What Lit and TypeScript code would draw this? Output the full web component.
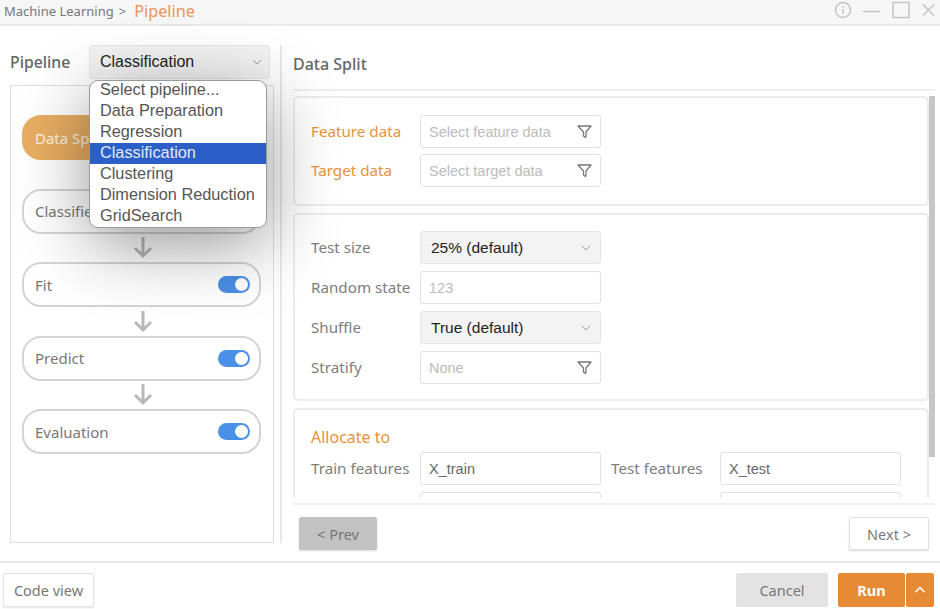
import {css, html, LitElement, svg, type TemplateResult} from 'lit';
import {customElement} from 'lit/decorators.js';

const PIPELINES = ['Select pipeline...', 'Data Preparation', 'Regression', 'Classification', 'Clustering', 'Dimension Reduction', 'GridSearch'];
const STEPS = ['Data Split', 'Classifier', 'Fit', 'Predict', 'Evaluation'];

const chevron = html`<svg class="chev" width="10" height="6" viewBox="0 0 10 6"><path d="M1 1l4 4 4-4" fill="none" stroke="#999" stroke-width="1"></path></svg>`;
const funnel = html`<svg class="funnel" width="15" height="15" viewBox="0 0 15 15"><path d="M1 2h13L9 8v3.5L8.500 13.500 6.500 12V8z" fill="none" stroke="#777" stroke-width="1.300" stroke-linejoin="round"></path></svg>`;
const arrow = svg`<svg width="20" height="23" viewBox="0 0 20 23"><path d="M10 1v19M2 12l8 8 8-8" fill="none" stroke="#b8b8b8" stroke-width="3"></path></svg>`;

@customElement('app-root')
export class AppRoot extends LitElement {

    static styles = css`
        :host {
            display: block;
            width: 940px;
            height: 609px;
            overflow: hidden;
            background: #fff;
            font-family: "Noto Sans", "Noto Sans CJK KR", sans-serif;
            color: #777;
        }
        .window {
            display: flex;
            flex-direction: column;
            height: 100%;
            position: relative;
        }
        .titlebar {
            flex: none;
            height: 26px;
            box-sizing: border-box;
            padding: 0 5px 2px 4px;
            display: flex;
            align-items: center;
            background: #f6f6f6;
            border-bottom: 2px solid #e8e8e8;
            font-size: 13px;
            color: #777;
            white-space: nowrap;
        }
        .crumb-now {
            font-size: 16.300px;
            color: #e8935a;
            margin-left: 8px;
        }
        .crumb-sep {
            margin-left: 5px;
        }
        .winbtns {
            margin-left: auto;
            display: block;
        }
        .work {
            flex: 1;
            min-height: 0;
            display: flex;
            padding: 19px 0 0 10px;
        }
        .left {
            flex: none;
            width: 264px;
            display: flex;
            flex-direction: column;
        }
        .pipe-row {
            flex: none;
            height: 34px;
            display: flex;
            align-items: center;
            font-size: 15.800px;
            font-weight: 500;
            color: #666;
        }
        .pipe-row > span {
            width: 79px;
            padding-bottom: 1px;
        }
        .select {
            box-sizing: border-box;
            display: flex;
            align-items: center;
            justify-content: space-between;
            height: 33px;
            background: #f3f3f3;
            border: 1px solid #e6e6e6;
            border-radius: 3px;
            font-family: "Liberation Sans", sans-serif;
            font-size: 16px;
            font-weight: 400;
            color: #222;
        }
        .pipe-select {
            width: 181px;
            height: 34px;
            padding: 0 7px 0 10px;
        }
        .flow {
            box-sizing: border-box;
            margin-top: 6px;
            height: 458px;
            border: 1px solid #dedede;
            padding: 29px 12px 0 11px;
        }
        .step {
            box-sizing: border-box;
            height: 45px;
            padding: 0 9px 0 11px;
            display: flex;
            align-items: center;
            justify-content: space-between;
            border: 2px solid #d4d4d4;
            border-radius: 19px;
            font-size: 15px;
            color: #777;
        }
        .step.active {
            background: #e8ae62;
            border-color: #e8ae62;
            color: #fdf3e3;
        }
        .arrow {
            height: 28.500px;
            padding-left: 2px;
            display: flex;
            align-items: center;
            justify-content: center;
        }
        .toggle {
            width: 32px;
            height: 17px;
            box-sizing: border-box;
            padding: 2px;
            display: flex;
            justify-content: flex-end;
            background: #4a8fe8;
            border-radius: 9px;
        }
        .toggle i {
            display: block;
            width: 13px;
            height: 13px;
            border-radius: 50%;
            background: #fff;
        }
        .divider {
            flex: none;
            width: 2px;
            height: 498px;
            margin-left: 6px;
            background: #e8e8e8;
        }
        .right {
            flex: none;
            width: 642px;
            margin-left: 11px;
            display: flex;
            flex-direction: column;
        }
        h2 {
            flex: none;
            box-sizing: border-box;
            height: 46px;
            margin: 0;
            padding-bottom: 6px;
            display: flex;
            align-items: center;
            border-bottom: 2px solid #efefef;
            font-size: 16px;
            font-weight: 500;
            color: #666;
        }
        .scroll {
            flex: none;
            height: 402px;
            margin-top: 5px;
            display: flex;
            overflow: hidden;
        }
        .panels {
            width: 636px;
            flex: none;
            display: flex;
            flex-direction: column;
            gap: 7px;
        }
        .thumb {
            flex: none;
            width: 7px;
            height: 361px;
            background: #c6c6c6;
        }
        .panel {
            flex: none;
            box-sizing: border-box;
            padding: 17px 16px;
            border: 2px solid #ececec;
            border-radius: 5px;
            display: grid;
            grid-template-columns: 109px 181px 119px 181px;
            row-gap: 6px;
            align-items: center;
        }
        .panel.settings {
            padding: 16px 16px 15px;
            row-gap: 7px;
        }
        .panel.allocate {
            padding-top: 18px;
            row-gap: 4px;
        }
        .panel .label {
            padding-bottom: 2px;
            font-size: 15.200px;
            color: #7d7d7d;
            white-space: nowrap;
        }
        .panel .label.second {
            padding-left: 10px;
        }
        .panel .label.accent,
        .panel .heading {
            color: #e8923a;
        }
        .heading {
            grid-column: 1 / -1;
            font-size: 16px;
            line-height: 18px;
            padding-bottom: 2px;
        }
        .panel .select {
            padding: 0 9px 0 10px;
            font-size: 15.500px;
        }
        .input {
            box-sizing: border-box;
            display: flex;
            align-items: center;
            justify-content: space-between;
            height: 33px;
            padding: 0 8px;
            background: #fff;
            border: 1px solid #e2e2e2;
            border-radius: 3px;
            font-family: "Liberation Sans", sans-serif;
            font-size: 14.500px;
            color: #bbb;
        }
        .input.filled {
            color: #666;
        }
        .allocate .input:nth-last-child(-n+3) {
            margin-top: 3px;
        }
        .nav {
            flex: none;
            box-sizing: border-box;
            height: 58px;
            margin-top: 5px;
            padding: 12px 6px 0 6px;
            border-top: 2px solid #efefef;
            display: flex;
            justify-content: space-between;
            align-items: flex-start;
        }
        button {
            font-family: inherit;
            box-sizing: border-box;
            padding: 0;
            cursor: pointer;
        }
        .nav button {
            height: 33px;
            font-size: 14.500px;
            color: #777;
            background: #fff;
            border: 1px solid #e2e2e2;
            border-radius: 2px;
            box-shadow: 0 1px 2px rgba(0, 0, 0, .15);
        }
        .nav .prev {
            width: 78px;
            background: #c2c2c2;
            border-color: #c2c2c2;
        }
        .nav .next {
            width: 80px;
        }
        .footer {
            flex: none;
            box-sizing: border-box;
            height: 48px;
            border-top: 2px solid #e8e8e8;
            padding: 10px 6px 0 3px;
            display: flex;
            align-items: flex-start;
        }
        .footer button {
            height: 34px;
            font-size: 14.500px;
            border-radius: 2px;
        }
        .code {
            width: 91px;
            background: #fff;
            color: #777;
            border: 1px solid #e2e2e2;
            box-shadow: 0 1px 2px rgba(0, 0, 0, .1);
        }
        .cancel {
            width: 92px;
            margin-left: auto;
            background: #e3e3e3;
            color: #777;
            border: 0;
        }
        .run {
            width: 67px;
            margin-left: 10px;
            background: #e68a33;
            color: #fff;
            font-weight: 700;
            border: 0;
        }
        .more {
            width: 28px;
            margin-left: 1px;
            background: #e68a33;
            border: 0;
            display: flex;
            align-items: center;
            justify-content: center;
        }
        .menu {
            position: absolute;
            left: 89px;
            top: 80px;
            width: 178px;
            height: 148px;
            box-sizing: border-box;
            background: #fff;
            border: 1px solid #999;
            border-radius: 9px;
            box-shadow: 0 16px 70px rgba(0, 0, 0, .42);
            overflow: hidden;
            font-family: "Liberation Sans", sans-serif;
            font-size: 16.300px;
            color: #555;
        }
        .menu div {
            height: 21px;
            line-height: 19px;
            padding-left: 10px;
            white-space: nowrap;
        }
        .menu div:first-child {
            margin-top: -1px;
        }
        .menu div.selected {
            background: #2b5fc7;
            color: #e8e8f4;
        }
    `;

    private renderStep(name: string, index: number): TemplateResult {
        return html`
            ${index > 0 ? html`<div class="arrow">${arrow}</div>` : ''}
            <div class="step ${index === 0 ? 'active' : ''}">
                <span>${name}</span>
                ${index > 0 ? html`<span class="toggle"><i></i></span>` : ''}
            </div>`;
    }

    render(): TemplateResult {
        return html`
            <div class="window">
                <div class="titlebar">
                    <span>Machine Learning</span><span class="crumb-sep">&gt;</span><span class="crumb-now">Pipeline</span>
                    <svg class="winbtns" width="102" height="20" viewBox="0 0 102 20">
                        <g fill="none" stroke="#c4c4c4" stroke-width="1.500">
                            <circle cx="10" cy="9" r="7.500"></circle>
                            <path d="M10 8v5M10 5v1.500"></path>
                            <path d="M30 10.500h17" ></path>
                            <rect x="60" y="1.500" width="16" height="15"></rect>
                            <path d="M90 3.500l11 11M101 3.500l-11 11"></path>
                        </g>
                    </svg>
                </div>
                <div class="work">
                    <div class="left">
                        <div class="pipe-row">
                            <span>Pipeline</span>
                            <div class="select pipe-select">Classification ${chevron}</div>
                        </div>
                        <div class="flow">${STEPS.map((s, i) => this.renderStep(s, i))}</div>
                    </div>
                    <div class="divider"></div>
                    <div class="right">
                        <h2>Data Split</h2>
                        <div class="scroll">
                            <div class="panels">
                                <section class="panel">
                                    <span class="label accent">Feature data</span>
                                    <div class="input">Select feature data ${funnel}</div>
                                    <span></span><span></span>
                                    <span class="label accent">Target data</span>
                                    <div class="input">Select target data ${funnel}</div>
                                </section>
                                <section class="panel settings">
                                    <span class="label">Test size</span>
                                    <div class="select">25% (default) ${chevron}</div>
                                    <span></span><span></span>
                                    <span class="label">Random state</span>
                                    <div class="input">123</div>
                                    <span></span><span></span>
                                    <span class="label">Shuffle</span>
                                    <div class="select">True (default) ${chevron}</div>
                                    <span></span><span></span>
                                    <span class="label">Stratify</span>
                                    <div class="input">None ${funnel}</div>
                                </section>
                                <section class="panel allocate">
                                    <div class="heading">Allocate to</div>
                                    <span class="label">Train features</span>
                                    <div class="input filled">X_train</div>
                                    <span class="label second">Test features</span>
                                    <div class="input filled">X_test</div>
                                    <span></span>
                                    <div class="input"></div>
                                    <span></span>
                                    <div class="input"></div>
                                </section>
                            </div>
                            <div class="thumb"></div>
                        </div>
                        <div class="nav">
                            <button class="prev">&lt; Prev</button>
                            <button class="next">Next &gt;</button>
                        </div>
                    </div>
                </div>
                <div class="footer">
                    <button class="code">Code view</button>
                    <button class="cancel">Cancel</button>
                    <button class="run">Run</button>
                    <button class="more" aria-label="More">
                        <svg width="12" height="8" viewBox="0 0 12 8"><path d="M1.500 6L6 1.500 10.500 6" fill="none" stroke="#fff" stroke-width="1.500"></path></svg>
                    </button>
                </div>
                <div class="menu">
                    ${PIPELINES.map((p) => html`<div class=${p === 'Classification' ? 'selected' : ''}>${p}</div>`)}
                </div>
            </div>
        `;
    }
}
